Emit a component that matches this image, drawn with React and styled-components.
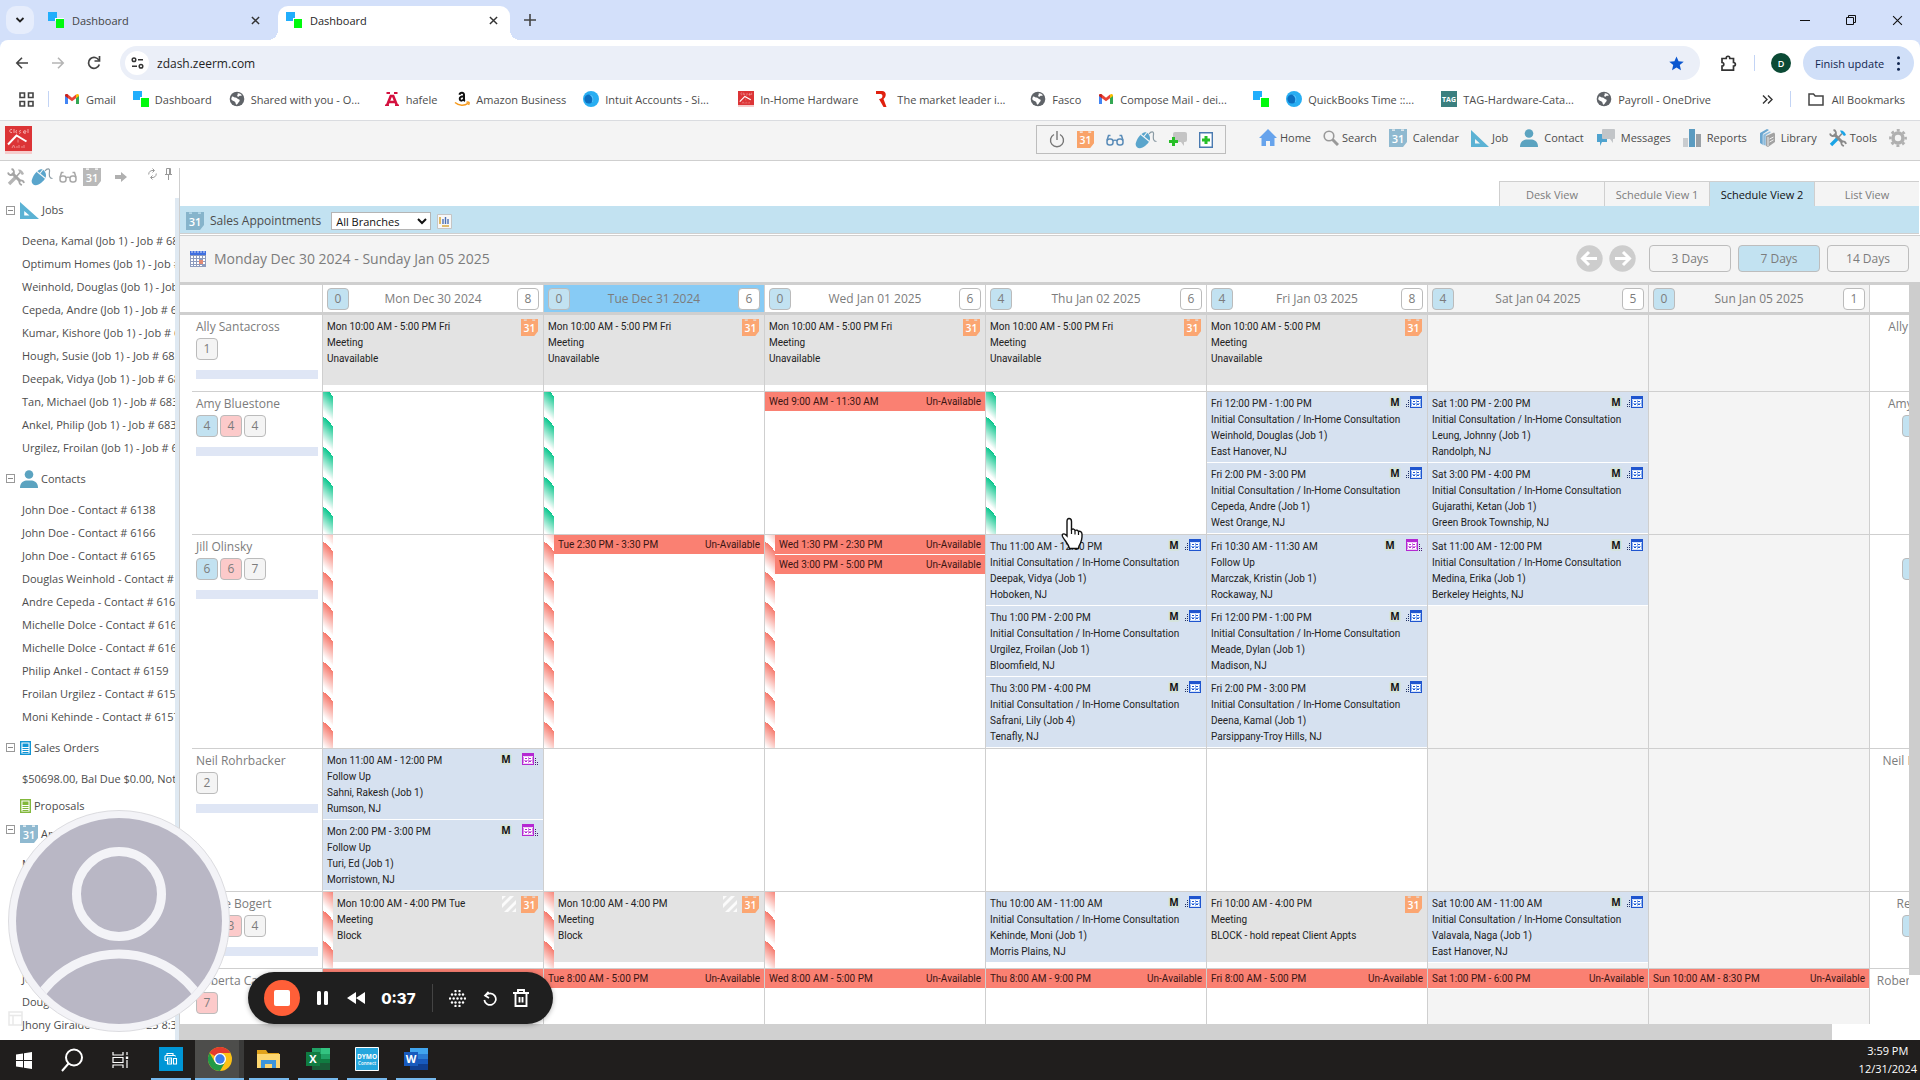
import React from "react";
import styled, { createGlobalStyle, css } from "styled-components";

const GlobalStyle = createGlobalStyle`
  *, *::before, *::after { box-sizing: border-box; }
  body { margin: 0; background: #fff; overflow: hidden; font-family: "Open Sans", "Noto Sans", sans-serif; }
  button, input, select { font: inherit; color: inherit; margin: 0; }
  button { border: 0; padding: 0; background: none; cursor: pointer; }
  a { color: inherit; text-decoration: none; }
  svg { display: block; flex: none; }
`;

const color = {
  strip: "#d3e0fa",
  omni: "#ebeff8",
  grey: "#f4f4f4",
  line: "#cfcfcf",
  blue: "#c2e2f1",
  card: "#d6e1f0",
  meeting: "#e3e3e3",
  red: "#fa8072",
  text: "#4c4c4c",
  soft: "#7c7c7c",
};

/* ---------- icons ---------- */

const ZLogo = () => (
  <svg width="16" height="16" viewBox="0 0 16 16">
    <path d="M0 0h9v9H0z" fill="#21aefc" />
    <path d="M7 6h9v10H8V9H7z" fill="#fff" />
    <path d="M8 7h8v9H8z" fill="#00fa0c" />
  </svg>
);
const Cross = ({ size = 9, w = 1.6, c = "#333" }) => (
  <svg width={size} height={size} viewBox="0 0 10 10" stroke={c} strokeWidth={w} fill="none">
    <path d="M1 1l8 8M9 1l-8 8" />
  </svg>
);
const Gmail = () => (
  <svg width="16" height="16" viewBox="0 0 16 16">
    <path d="M1 4v9h3V6.500z" fill="#4285f4" />
    <path d="M15 4v9h-3V6.500z" fill="#34a853" />
    <path d="M1 4.500c0-1.600 1.700-2 3-1l4 3.200 4-3.200v3.700L8 10.300 4 7.200z" fill="#ea4335" />
    <path d="M1 4.500c0-1.600 1.700-2 3-1v3.700L1 5z" fill="#c5221f" />
    <path d="M12 3.500c1.300-1 3-.6 3 1V5l-3 2.200z" fill="#fbbc04" />
  </svg>
);
const Globe = () => (
  <svg width="16" height="16" viewBox="0 0 16 16">
    <circle cx="8" cy="8" r="7.300" fill="#5f6368" />
    <path d="M3 5.500c1.500-.5 2 1 3.500 1S8 8 9.500 8.200c1.500.2 1.500 1.600.6 2.600-1 1-1.600 2.600-2.600 3-1-.4-.7-1.800-1.400-2.700C5.200 10 2.500 9.500 2.200 8zM8.500 2.200c1.300-.3 3.500.6 4.300 2-.8 1.300-1.800 0-2.800 1s-1.800.6-1.800-.6 1.300-1 .3-2.400z" fill="#fff" />
  </svg>
);
const Hafele = () => (
  <svg width="16" height="16" viewBox="0 0 16 16" fill="none" stroke="#d4113f" strokeWidth="2.600">
    <path d="M3 14.500L6.800 5h2.400L13 14.500M4.500 11h7" />
    <path d="M2.500 2h3.500M10 2h3.500" strokeWidth="2.200" />
    <path d="M1 14.300h4M11 14.300h4" strokeWidth="1.400" />
  </svg>
);
const Amazon = () => (
  <svg width="16" height="16" viewBox="0 0 16 16" fill="none">
    <path d="M5.500 3.800C6 1.300 10 1 10 3.800V8.500c0 .7.500 1.300 1 1.500M10 5.300C7.500 5.200 5.600 6 5.700 8c.2 2.200 3.600 2.200 4.300-.2" stroke="#111" strokeWidth="2" />
    <path d="M1 11.500c4 3.500 9.500 3.500 13 .8M14.500 13.800c.6-1 .8-2 .3-2.500-.6-.4-1.500-.3-2.300.1" stroke="#f79a1c" strokeWidth="1.500" />
  </svg>
);
const Intuit = () => (
  <svg width="16" height="16" viewBox="0 0 16 16">
    <circle cx="8" cy="8" r="8" fill="#28aef2" />
    <circle cx="6" cy="8" r="4.600" fill="#0c6fc0" />
    <path d="M6 3.400a4.600 4.600 0 0 1 2.500 8.500A6 6 0 0 0 6 3.400z" fill="#4fc3ff" />
  </svg>
);
const Closets = ({ w = 16, h = 16 }) => (
  <svg width={w} height={h} viewBox="0 0 27 28" preserveAspectRatio="none">
    <path d="M0 0h27v25H0z" fill="#dc3436" />
    <path d="M0 25h27v3H0z" fill="#f6cccc" />
    <path d="M3 18.500L11.500 9.500l10 6" stroke="#fff" strokeWidth="2" fill="none" />
    <path d="M7 3.500c-3-1-3 4 0 3M9 3v4M12 4.500a1 1 0 1 0 .1 2.500M16 4.500c-2 0-2 1.200-1 1.500s.6 1.500-1 1.300M18.500 6h2.500c0-2-2.500-2-2.500 0s2 1.400 2.500.8M23 3v4" stroke="#f6b4b4" strokeWidth=".9" fill="none" />
    <path d="M13 13.500v3M7 22l1.500-3L10 22M12 20v2M14 19v3M17 20v2M19 19v3" stroke="#ee8a8a" strokeWidth="1" fill="none" />
  </svg>
);
const Richelieu = () => (
  <svg width="16" height="16" viewBox="0 0 16 16">
    <path d="M1 0h6c5 0 4.500 6 1.500 8l3 8H8.500L4 8c4 .3 4.500-5 1.500-5H1z" fill="#e0200e" />
  </svg>
);
const Tag = () => (
  <svg width="16" height="16" viewBox="0 0 16 16">
    <path d="M0 0h16v16H0z" fill="#3a7f7f" />
    <text x="8" y="11" fontSize="7" fontWeight="700" fill="#fff" textAnchor="middle" fontFamily="Open Sans">TAG</text>
  </svg>
);
const Day31 = ({ c = "#8fb9d0", size = 18 }) => (
  <svg width={size} height={size} viewBox="0 0 18 18">
    <path d="M0 0h3v2h3V0h6v2h3V0h3v13l-4 5H0z" fill={c} />
    <path d="M3 0h3v1.500H3zM12 0h3v1.500h-3z" fill={c} opacity=".5" />
    <text x="9" y="14" fontSize="11" fontWeight="600" fill="#fff" textAnchor="middle" fontFamily="Open Sans">31</text>
  </svg>
);
const Triangle = ({ size = 18 }) => (
  <svg width={size} height="18" viewBox="0 0 18 18" preserveAspectRatio="none">
    <path d="M0 1l18 17H0zM4 10v4.500h5z" fill="#5bb2d4" fillRule="evenodd" />
  </svg>
);
const Person = () => (
  <svg width="18" height="18" viewBox="0 0 18 18" fill="#5ba3c0">
    <circle cx="9" cy="4.500" r="4.300" />
    <path d="M0 18c0-5 3-7 6-7.500h6c3 .5 6 2.500 6 7.500z" />
  </svg>
);
const Glasses = ({ c = "#5a8cb8" }) => (
  <svg width="18" height="12" viewBox="0 0 18 12" fill="none" stroke={c} strokeWidth="1.500">
    <rect x="1" y="5" width="6" height="6" rx="2.500" />
    <rect x="11" y="5" width="6" height="6" rx="2.500" />
    <path d="M7 7c1-1 3-1 4 0M1 6.500L2.500 1.500h2M17 6.500L15.500 1.500h-2" />
  </svg>
);
const Mouse = ({ size = 22 }) => (
  <svg width={size} height="18" viewBox="0 0 22 18">
    <path d="M1 11.500C-.5 15 3 19 7.500 16.500c4-2 7.500-6 7.500-9C15 3 11 0 8 2 5 3.500 2 8 1 11.500z" fill="#5aa5cc" />
    <path d="M6 3.500l8.500 7M8.500 6L12 1.500" stroke="#f7f7f7" strokeWidth="1.100" />
    <path d="M14 3c2-3 5-3 4.500.5-.5 3.500-.5 7 3 7" fill="none" stroke="#8a9aa3" strokeWidth="1.200" />
  </svg>
);
const Tools = ({ c = "#8a8a8a", a = "#1ba4e6" }) => (
  <svg width="18" height="18" viewBox="0 0 18 18" fill="none" strokeWidth="3">
    <path d="M2 16l6.500-6.500" stroke={a} strokeWidth="3.400" />
    <path d="M8.500 9.500l4.500-5" stroke={c} strokeWidth="1.600" />
    <path d="M11 1.500c3-.5 4.500 1 6 4.500l-2 1-3-3.500z" fill={a} />
    <path d="M5 5l8.500 8.500" stroke={c} />
    <path d="M1 4.500c.5 2.500 3 3 5 2M4.500 1c2.500.5 3 3 2 5M12.500 13c-.5 2 .5 3.500 2.500 4M13 12.500c2-.5 3.500.5 4 2.500" stroke={c} strokeWidth="1.800" />
  </svg>
);
const Gear = () => (
  <svg width="18" height="18" viewBox="0 0 18 18">
    <circle cx="9" cy="9" r="5" fill="none" stroke="#b0b0b0" strokeWidth="3.600" />
    <circle cx="9" cy="9" r="7.700" fill="none" stroke="#b0b0b0" strokeWidth="2.400" strokeDasharray="3 3.047" strokeDashoffset="1.500" />
  </svg>
);
const Home = () => (
  <svg width="18" height="17" viewBox="0 0 18 17">
    <path d="M9 0l9 9h-2.500v8H11v-5H7v5H2.500V9H0z" fill="#66a3ec" />
  </svg>
);
const Search = () => (
  <svg width="16" height="16" viewBox="0 0 16 16" fill="none" stroke="#999">
    <circle cx="6" cy="6" r="4.800" strokeWidth="1.600" />
    <path d="M9.500 9.500l5.500 5.500" strokeWidth="3" />
  </svg>
);
const Messages = () => (
  <svg width="19" height="17" viewBox="0 0 19 17">
    <path d="M1 5h10v8H6l-2 4v-4H1z" fill="#4fa3cf" />
    <path d="M7 0h11a1 1 0 0 1 1 1v8a1 1 0 0 1-1 1h-1v4l-3-4H7a1 1 0 0 1-1-1V1a1 1 0 0 1 1-1z" fill="#c2c5c8" />
  </svg>
);
const Reports = () => (
  <svg width="18" height="18" viewBox="0 0 18 18">
    <path d="M0 9h5v9H0z" fill="#c9cccf" />
    <path d="M6 0h6v18H6z" fill="#5b9bc0" />
    <path d="M13 5h5v13h-5z" fill="#9aa0a5" />
  </svg>
);
const Library = () => (
  <svg width="16" height="18" viewBox="0 0 16 18">
    <path d="M1 4l7-4 2 1-6 4v11L1 14z" fill="#6aa6d0" />
    <path d="M4 5.500L11 2l1 1.500-5 3V17l-3-1z" fill="#8dbbdc" stroke="#f4f4f4" strokeWidth=".5" />
    <path d="M7 7l8-3.500 1 1V13l-7 5-2-1z" fill="#a2a2a2" />
    <path d="M9 8v9M10.500 10l4-2M10.500 13l4-2.200" stroke="#eee" />
  </svg>
);
const ChatPlus = () => (
  <svg width="18" height="16" viewBox="0 0 18 16">
    <path d="M6 0h10a2 2 0 0 1 2 2v6a2 2 0 0 1-2 2h-1v4l-3-4H6a2 2 0 0 1-2-2V2a2 2 0 0 1 2-2z" fill="#c4c4c4" />
    <path d="M0 8h3V5h3v3h3v3H6v3H3v-3H0z" fill="#27bf27" />
  </svg>
);
const DocPlus = () => (
  <svg width="14" height="16" viewBox="0 0 14 16">
    <path d="M.7.700h12.600v14.600H.7z" fill="#fff" stroke="#4a7ab0" strokeWidth="1.400" />
    <path d="M3 6.500h2.500V4h3v2.500H11v3H8.500V12h-3V9.500H3z" fill="#27bf27" />
  </svg>
);
const Power = () => (
  <svg width="16" height="17" viewBox="0 0 16 17" fill="none" stroke="#777" strokeWidth="1.400">
    <path d="M5 3.500a6.500 6.500 0 1 0 6 0M8 0v9" />
  </svg>
);
const MiniCal = () => (
  <svg width="16" height="17" viewBox="0 0 16 17">
    <path d="M0 1h16v16H0z" fill="#8d9bbd" />
    <path d="M0 1h16v4H0z" fill="#3f6fe0" />
    <path d="M2 0v3M5 0v3M8 0v3M11 0v3M14 0v3" stroke="#fff" strokeWidth=".8" />
    <path d="M1 6h2v2H1zM4 6h2v2H4zM7 6h2v2H7zM10 6h2v2h-2zM13 6h2v2h-2zM1 9h2v2H1zM4 9h2v2H4zM7 9h2v2H7zM13 9h2v2h-2zM1 12h2v2H1zM4 12h2v2H4zM7 12h2v2H7zM13 12h2v2h-2zM1 15h2v1H1zM4 15h2v1H4zM7 15h2v1H7zM10 15h2v1h-2z" fill="#fff" />
    <path d="M9 10h4v4H9z" fill="#e08a74" />
  </svg>
);
const Chart = () => (
  <svg width="15" height="15" viewBox="0 0 15 15">
    <path d="M.5.500h14v14H.5z" fill="#f7f7f7" stroke="#c5c5c5" />
    <path d="M3 3v7M5 12h7" stroke="#d9a941" strokeWidth="1.600" />
    <path d="M6 5v5M8.500 3v7M11 5v5" stroke="#4a6fb5" strokeWidth="1.400" />
  </svg>
);
const FormIcon = ({ purple }) => {
  const c = purple ? "#b428d2" : "#1f55cf";
  const soft = purple ? "#d98be8" : "#8fb4f0";
  const dark = purple ? "#4a1a70" : "#1d2f66";
  return (
    <svg width="16" height="12" viewBox="0 0 16 12">
      <g transform={purple ? "" : "translate(4 0)"}>
        <path d="M0 0h12v12H0z" fill={c} />
        <path d="M1 3h10v8H1z" fill={soft} />
        <path d="M1 3h10v1H1zM1 10h10v1H1z" fill="#fff" opacity=".6" />
        <path d="M2 4h4v3H2zM2 8h4v2H2zM7 4h3v3H7zM7 8h3v2H7z" fill="#fff" />
        <path d="M3 5h2v1H3zM3 8h2v1H3zM7 5h2v1H7zM7 8h2v1H7z" fill={c} />
      </g>
      <path d={purple ? "M13.500 5v7M15.500 9v3" : "M2.500 4v8M.5 8v4"} stroke={dark} strokeWidth="1" strokeDasharray="1 1" />
    </svg>
  );
};
const Hatch = () => (
  <svg width="14" height="16" viewBox="0 0 14 16">
    <path d="M0 8l8-8h4L0 12zM2 16L14 4v4l-8 8zM10 16l4-4v4zM0 0h4L0 4z" fill="#fff" opacity=".85" />
  </svg>
);
const Sheet = ({ c }) => (
  <svg width="11" height="14" viewBox="0 0 11 14">
    <path d="M.7.700h9.600v12.600H.7z" fill="#fff" stroke={c} strokeWidth="1.400" />
    <path d="M2.500 3.500h6M2.500 5h6" stroke={c} strokeWidth="1.800" />
    <path d="M2.500 7.500h6M2.500 9.500h6M2.500 11.500h6" stroke={c} strokeWidth="1" />
  </svg>
);
const ArrowDisc = ({ back }) => (
  <svg width="27" height="27" viewBox="0 0 27 27">
    <circle cx="13.500" cy="13.500" r="13.200" fill="#cdcdcd" />
    <path d={back ? "M21 13.500H7M13 7l-6.500 6.500L13 20" : "M6 13.500h14M14 7l6.500 6.500L14 20"} stroke="#fff" strokeWidth="3" fill="none" />
  </svg>
);

/* ---------- browser chrome ---------- */

const Screen = styled.div`
  position: relative;
  display: flex;
  flex-direction: column;
  height: 100vh;
  overflow: hidden;
  font-size: 11px;
  color: ${color.text};
`;
const TabStrip = styled.div`
  display: flex;
  flex: none;
  align-items: flex-end;
  height: 40px;
  padding-left: 6px;
  background: ${color.strip};
`;
const TabMenu = styled.button`
  display: grid;
  place-items: center;
  align-self: center;
  width: 28px;
  height: 28px;
  margin-right: 6px;
  border-radius: 10px;
  background: #e6edfc;
`;
const BrowserTab = styled.div`
  position: relative;
  display: flex;
  align-items: center;
  width: 232px;
  height: 34px;
  margin-right: 6px;
  padding: 0 12px 6px 8px;
  border-radius: 10px 10px 0 0;
  color: #444;
  ${(p) =>
    p.$active &&
    css`
      background: #fff;
      color: #1f1f1f;
      &::before, &::after {
        content: "";
        position: absolute;
        bottom: 0;
        width: 10px;
        height: 10px;
      }
      &::before { left: -10px; background: radial-gradient(circle at 0 0, transparent 10px, #fff 10px); }
      &::after { right: -10px; background: radial-gradient(circle at 100% 0, transparent 10px, #fff 10px); }
    `}
`;
const TabTitle = styled.span`
  flex: 1;
  margin-left: 8px;
`;
const NewTab = styled.button`
  display: grid;
  place-items: center;
  width: 28px;
  height: 40px;
`;
const WindowControls = styled.div`
  display: flex;
  margin-left: auto;
`;
const WindowButton = styled.button`
  display: grid;
  place-items: center;
  width: 46px;
  height: 40px;
`;
const ToolbarBack = styled.div`
  flex: none;
  background: ${color.strip};
`;
const Toolbar = styled.div`
  display: flex;
  align-items: center;
  height: 40px;
  padding: 6px 6px 0 4px;
  border-radius: 8px 8px 0 0;
  background: #fff;
`;
const NavButton = styled.button`
  display: grid;
  place-items: center;
  width: 36px;
  height: 34px;
`;
const Omnibox = styled.label`
  display: flex;
  flex: 1;
  align-items: center;
  height: 34px;
  margin-left: 8px;
  padding: 0 16px 0 5px;
  border-radius: 17px;
  background: ${color.omni};
`;
const SiteInfo = styled.span`
  display: grid;
  place-items: center;
  width: 24px;
  height: 24px;
  border-radius: 12px;
  background: #fff;
`;
const Address = styled.input`
  flex: 1;
  border: 0;
  padding: 0 8px;
  outline: 0;
  background: none;
  font-size: 12px;
  color: #1f1f1f;
`;
const Puzzle = styled(NavButton)`
  margin-left: 10px;
`;
const Rule = styled.span`
  width: 1px;
  height: 16px;
  margin: 0 8px;
  background: #c3d4f5;
`;
const Profile = styled.button`
  width: 20px;
  height: 20px;
  margin: 0 12px 0 8px;
  border-radius: 10px;
  background: #0b4a35;
  color: #fff;
  font-size: 9px;
  font-weight: 600;
`;
const UpdateButton = styled.button`
  display: flex;
  align-items: center;
  justify-content: space-between;
  width: 111px;
  height: 34px;
  padding: 0 14px 0 12px;
  border-radius: 17px;
  background: #d0dff8;
  color: #10264f;
`;
const Bookmarks = styled.nav`
  display: flex;
  flex: none;
  align-items: center;
  height: 41px;
  padding: 0 15px 2px 19px;
  border-bottom: 1px solid #dadce0;
  background: #fff;
`;
const Apps = styled.button`
  margin-right: 14px;
`;
const BookmarkRule = styled(Rule)`
  margin: 0 15px 0 0;
`;
const BookmarkRuleEnd = styled(Rule)`
  margin: 0;
`;
const Bookmark = styled.a`
  display: flex;
  align-items: center;
  gap: 6px;
  margin-right: 17px;
  white-space: nowrap;
`;
const BookmarkLabel = styled.span`
  width: ${(p) => (p.$full ? "116px" : "auto")};
`;
const BookmarkEnd = styled.div`
  display: flex;
  align-items: center;
  gap: 17px;
  margin-left: auto;
`;
const AllBookmarks = styled.a`
  display: flex;
  align-items: center;
  gap: 8px;
`;

/* ---------- application ---------- */

const AppHeader = styled.header`
  display: flex;
  flex: none;
  align-items: flex-start;
  height: 40px;
  padding: 4px 13px 0 5px;
  border-bottom: 1px solid ${color.line};
  background: ${color.grey};
`;
const LogoLink = styled.a`
  padding-top: 1px;
`;
const QuickTools = styled.div`
  display: flex;
  align-items: center;
  justify-content: space-between;
  width: 190px;
  height: 29px;
  margin: 0 33px 0 auto;
  padding: 0 12px;
  border: 1px solid #bdbdbd;
`;
const MainNav = styled.nav`
  display: flex;
  align-items: center;
  gap: 12px;
  height: 25px;
`;
const NavLink = styled.a`
  display: flex;
  align-items: center;
  gap: ${(p) => (p.$tight ? 3 : 6)}px;
`;
const Body = styled.div`
  display: flex;
  flex: 1;
  min-height: 0;
`;
const Sidebar = styled.aside`
  display: flex;
  flex: none;
  flex-direction: column;
  width: 180px;
  padding-top: 7px;
`;
const SidebarInner = styled.div`
  display: flex;
  flex: 1;
  min-height: 0;
  border-right: 1px solid ${color.line};
`;
const SidebarContent = styled.div`
  flex: 1;
  min-width: 0;
  overflow: hidden;
`;
const SidebarScroll = styled.div`
  width: 4px;
  margin-top: 30px;
  background: #dfe9f2;
`;
const SidebarTools = styled.div`
  display: flex;
  align-items: center;
  gap: 6px;
  height: 18px;
  margin-bottom: 5px;
  padding-left: 7px;
`;
const SideArrow = styled.svg`
  margin-left: 8px;
`;
const SideRefresh = styled.svg`
  margin: 0 0 6px 15px;
`;
const SidePin = styled.svg`
  margin: 0 0 6px 2px;
`;
const SideHeading = styled.h2`
  display: flex;
  align-items: ${(p) => (p.$top ? "flex-start" : "center")};
  gap: 3px;
  height: ${(p) => p.$h || 38}px;
  margin: 0;
  padding: ${(p) => (p.$top ? "3px 0 0 6px" : "0 0 0 6px")};
  font-size: 11px;
  font-weight: 400;
  line-height: 18px;
  white-space: nowrap;
`;
const Toggle = styled.button`
  display: grid;
  place-items: center;
  width: 9px;
  height: 9px;
  margin-right: 2px;
  border: 1px solid #999;
  visibility: ${(p) => (p.$hidden ? "hidden" : "visible")};
  &::before { content: ""; width: 5px; height: 1px; background: #888; }
`;
const SideList = styled.ul`
  margin: 0;
  padding: 0 0 0 22px;
  list-style: none;
`;
const SideItem = styled.li`
  height: 23px;
  line-height: 23px;
  white-space: nowrap;
`;
const Main = styled.main`
  display: flex;
  flex: 1;
  flex-direction: column;
  min-width: 0;
`;
const ViewTabs = styled.div`
  display: flex;
  flex: none;
  align-items: flex-end;
  justify-content: flex-end;
  height: 45px;
  padding-right: 1px;
`;
const ViewTab = styled.button`
  width: 105px;
  height: 25px;
  border: 1px solid ${color.line};
  border-width: 1px 0 0 1px;
  background: ${(p) => (p.$active ? color.blue : color.grey)};
  color: ${(p) => (p.$active ? "#111" : color.soft)};
  font-size: 11px;
`;
const SectionBar = styled.div`
  display: flex;
  flex: none;
  align-items: center;
  height: 28px;
  margin: 0 1px 1px 0;
  padding: 3px 0 0 6px;
  border-bottom: 1px solid ${color.line};
  background: ${color.blue};
`;
const SectionTitle = styled.h1`
  margin: 0 10px 0 6px;
  font-size: 12px;
  font-weight: 400;
  line-height: 18px;
`;
const SelectBox = styled.span`
  position: relative;
  width: 100px;
  height: 18px;
  margin-right: 6px;
  svg { position: absolute; top: 6px; right: 4px; pointer-events: none; }
`;
const BranchSelect = styled.select`
  display: block;
  width: 100%;
  height: 18px;
  padding: 0 4px;
  border: 1px solid #b5b5b5;
  border-radius: 0;
  background: #fff;
  appearance: none;
  color: #111;
  font-size: 11px;
`;
const DateBar = styled.div`
  display: flex;
  flex: none;
  align-items: center;
  height: 47px;
  padding: 0 11px 1px 10px;
  border-top: 1px solid ${color.line};
  background: ${color.grey};
  color: ${color.soft};
`;
const DateRange = styled.h2`
  flex: 1;
  margin: 0 0 0 8px;
  font-size: 14px;
  font-weight: 400;
`;
const RoundButton = styled.button`
  margin-right: 6px;
`;
const RangeButton = styled.button`
  width: 82px;
  height: 27px;
  margin-left: 7px;
  border: 1px solid #bdbdbd;
  border-radius: 4px;
  background: ${(p) => (p.$active ? color.blue : color.grey)};
  font-size: 12px;
`;
const Scheduler = styled.div`
  display: flex;
  flex: 1;
  min-height: 0;
`;
const TableClip = styled.div`
  flex: 1;
  min-width: 0;
  overflow: hidden;
`;
const VScroll = styled.div`
  width: 11px;
  margin-bottom: 49px;
  background: #cdcdcd;
`;
const HScroll = styled.div`
  flex: none;
  height: 16px;
  margin-right: 88px;
  background: #d0d0d0;
`;
const Grid = styled.table`
  width: 100%;
  table-layout: fixed;
  border-collapse: separate;
  border-spacing: 0;
`;
const Col = styled.col`
  width: ${(p) => (p.$w ? p.$w + "px" : "auto")};
`;
const HeadCell = styled.th`
  height: 33px;
  padding: 0;
  border: 3px solid ${color.line};
  border-width: 3px 0;
  background: ${(p) => (p.$today ? "#87cbf5" : p.$off ? color.grey : "#fff")};
  color: ${color.soft};
  font-size: 12px;
  font-weight: 400;
  ${(p) => p.$divided && `box-shadow: inset 1px 0 0 ${color.line};`}
`;
const HeadInner = styled.div`
  display: flex;
  align-items: center;
  justify-content: space-between;
  padding: 0 4px 0 5px;
`;
const Count = styled.span`
  display: inline-grid;
  place-items: center;
  flex: none;
  width: 22px;
  height: 22px;
  border: 1px solid #bbb;
  border-radius: 4px;
  background: ${(p) => ({ blue: color.blue, red: "#fccaca", white: "#fff", grey: color.grey })[p.$tone]};
  color: ${color.soft};
  font-size: 12px;
  font-weight: 400;
  line-height: 18px;
`;
const Gutter = styled.td`
  padding: 0;
`;
const NameCell = styled.th`
  height: 77px;
  padding: 3px 4px 0;
  border-bottom: 1px solid ${color.line};
  vertical-align: top;
  text-align: left;
  font-weight: 400;
`;
const Name = styled.div`
  color: ${color.soft};
  font-size: 12px;
  line-height: 18px;
  white-space: nowrap;
`;
const Counts = styled.div`
  display: flex;
  gap: 2px;
  height: 22px;
  margin: 2px 0 10px;
`;
const LoadBar = styled.div`
  height: 9px;
  background: #dfe6f5;
`;
const EndCell = styled.td`
  padding: 3px 0 0;
  overflow: hidden;
  border: 1px solid ${color.line};
  border-width: 0 0 1px 1px;
  vertical-align: top;
`;
const EndInner = styled.div`
  display: flex;
  flex-direction: column;
  align-items: flex-end;
  width: 102px;
`;
const stripe = {
  green: "linear-gradient(225deg, #cdf3e6 0, #fff 13%, #fff 25%, #0ec78f 25%, #fff 88%)",
  red: "linear-gradient(225deg, #fdded9 0, #fff 13%, #fff 25%, #f67a6d 25%, #fff 88%)",
};
const DayCell = styled.td`
  padding: 0 0 0 ${(p) => (p.$stripe ? 10 : 0)}px;
  border: 1px solid ${color.line};
  border-width: 0 0 1px 1px;
  vertical-align: top;
  background-color: ${(p) => (p.$off ? color.grey : "#fff")};
  ${(p) =>
    p.$stripe &&
    css`
      background-image: ${stripe[p.$stripe]};
      background-repeat: repeat-y;
      background-size: 10px 30px;
      background-position: 0 ${p.$phase}px;
    `}
`;
const Card = styled.article`
  display: flex;
  justify-content: space-between;
  height: 71px;
  padding: 4px 5px 0 4px;
  border-bottom: 1px solid #fff;
  background: ${(p) => (p.$meeting ? color.meeting : color.card)};
  color: #222;
  font-family: Roboto, "Open Sans", sans-serif;
  font-size: 10px;
  line-height: 16px;
  white-space: nowrap;
`;
const CardText = styled.div`
  width: 0;
`;
const CardIcons = styled.div`
  display: flex;
  gap: ${(p) => (p.$wide ? 10 : 5)}px;
`;
const MBadge = styled.b`
  width: 12px;
  height: 12px;
  border-radius: 3px;
  background: #d5e3dc;
  color: #111;
  font-family: "Open Sans", sans-serif;
  font-size: 10px;
  line-height: 12px;
  text-align: center;
`;
const Busy = styled.div`
  display: flex;
  justify-content: space-between;
  height: 20px;
  padding: 0 4px;
  border-bottom: 1px solid #fff;
  background: ${color.red};
  color: #3a1512;
  font-family: Roboto, "Open Sans", sans-serif;
  font-size: 10px;
  line-height: 19px;
`;

/* ---------- floating recorder ---------- */

const Avatar = styled.div`
  position: absolute;
  left: 8px;
  bottom: 48px;
`;
const Ghost = styled.div`
  position: absolute;
  left: 8px;
  bottom: 54px;
  opacity: .5;
`;
const Recorder = styled.div`
  position: absolute;
  left: 248px;
  bottom: 56px;
  display: flex;
  align-items: center;
  justify-content: space-between;
  width: 305px;
  height: 52px;
  padding: 0 24px 0 16px;
  border-radius: 26px;
  background: #1f1f1f;
  box-shadow: 0 1px 5px rgba(0, 0, 0, .3);
`;
const StopButton = styled.button`
  display: grid;
  place-items: center;
  width: 36px;
  height: 36px;
  border-radius: 18px;
  background: #ff5f38;
  &::before { content: ""; width: 16px; height: 16px; border-radius: 2px; background: #fff; }
`;
const Time = styled.time`
  color: #fff;
  font-family: Inter, sans-serif;
  font-size: 15px;
  font-weight: 800;
`;
const RecorderRule = styled.span`
  width: 1px;
  height: 28px;
  background: #444;
`;
const Pointer = styled.div`
  position: absolute;
  left: 1060px;
  top: 516px;
  pointer-events: none;
`;

/* ---------- taskbar ---------- */

const Taskbar = styled.footer`
  display: flex;
  flex: none;
  height: 40px;
  background: #201e1d;
  color: #fff;
`;
const SystemButton = styled.button`
  display: grid;
  place-items: center;
  width: 48px;
`;
const AppButton = styled.button`
  display: grid;
  grid-template-rows: 1fr 2px;
  place-items: center;
  width: 49px;
  background: ${(p) => (p.$active ? "linear-gradient(90deg, #4d4d4b 90%, #3a3a39 90%)" : "none")};
  &::after { content: ""; width: ${(p) => (p.$active ? 49 : 40)}px; height: 2px; background: #76b9ed; }
`;
const Clock = styled.div`
  margin-left: auto;
  padding: 2px 3px 0;
  text-align: center;
  font-size: 11px;
  line-height: 18px;
`;
const FirstApp = styled.div`
  width: 2px;
`;

/* ---------- data ---------- */

const bookmarks = [
  [<Gmail />, "Gmail"],
  [<ZLogo />, "Dashboard"],
  [<Globe />, "Shared with you - O...", 1],
  [<Hafele />, "hafele"],
  [<Amazon />, "Amazon Business"],
  [<Intuit />, "Intuit Accounts - Si...", 1],
  [<Closets />, "In-Home Hardware"],
  [<Richelieu />, "The market leader i...", 1],
  [<Globe />, "Fasco"],
  [<Gmail />, "Compose Mail - dei...", 1],
  [<ZLogo />, ""],
  [<Intuit />, "QuickBooks Time ::...", 1],
  [<Tag />, "TAG-Hardware-Cata...", 1],
  [<Globe />, "Payroll - OneDrive"],
];
const nav = [
  [<Home />, "Home", 1],
  [<Search />, "Search", 1],
  [<Day31 />, "Calendar"],
  [<Triangle />, "Job", 1],
  [<Person />, "Contact"],
  [<Messages />, "Messages"],
  [<Reports />, "Reports"],
  [<Library />, "Library"],
  [<Tools />, "Tools", 1],
];
const jobs = [
  "Deena, Kamal (Job 1) - Job # 6841",
  "Optimum Homes (Job 1) - Job # 6840",
  "Weinhold, Douglas (Job 1) - Job # 6839",
  "Cepeda, Andre (Job 1) - Job # 6838",
  "Kumar, Kishore (Job 1) - Job # 6837",
  "Hough, Susie (Job 1) - Job # 6836",
  "Deepak, Vidya (Job 1) - Job # 6835",
  "Tan, Michael (Job 1) - Job # 6834",
  "Ankel, Philip (Job 1) - Job # 6833",
  "Urgilez, Froilan (Job 1) - Job # 6832",
];
const contacts = [
  "John Doe - Contact # 6138",
  "John Doe - Contact # 6166",
  "John Doe - Contact # 6165",
  "Douglas Weinhold - Contact # 6164",
  "Andre Cepeda - Contact # 6163",
  "Michelle Dolce - Contact # 6162",
  "Michelle Dolce - Contact # 6161",
  "Philip Ankel - Contact # 6159",
  "Froilan Urgilez - Contact # 6158",
  "Moni Kehinde - Contact # 6157",
];
const appointments = [
  "Moni Kehinde 01/02/25",
  "Naga Valavala 01/04/25",
  "Ed Turi 12/30/24",
  "Rakesh Sahni 12/30/24",
  "Erika Medina 01/04/25",
  "Johnny Leung 01/04/25",
  "Douglas Weinhold 01/03",
  "Jhony Giraldo - 12/28/2025 8:30 AM",
];
const days = [
  ["Mon Dec 30 2024", 0, 8],
  ["Tue Dec 31 2024", 0, 6, "today"],
  ["Wed Jan 01 2025", 0, 6],
  ["Thu Jan 02 2025", 4, 6],
  ["Fri Jan 03 2025", 4, 8],
  ["Sat Jan 04 2025", 4, 5, "off"],
  ["Sun Jan 05 2025", 0, 1, "off"],
];

const IC = "Initial Consultation / In-Home Consultation";
const appt = (time, who, where, kind = IC) => ({ type: "appt", lines: [time, kind, who, where], purple: kind !== IC });
const meet = (time, note, hatch) => ({ type: "meet", lines: [time, "Meeting", note], hatch });
const busy = (time) => ({ type: "busy", time });
const day = (items = [], stripeTone) => ({ items, stripe: stripeTone });

const rows = [
  {
    name: "Ally Santacross",
    counts: [[1, "grey"]],
    days: [
      day([meet("Mon 10:00 AM - 5:00 PM Fri", "Unavailable")]),
      day([meet("Mon 10:00 AM - 5:00 PM Fri", "Unavailable")]),
      day([meet("Mon 10:00 AM - 5:00 PM Fri", "Unavailable")]),
      day([meet("Mon 10:00 AM - 5:00 PM Fri", "Unavailable")]),
      day([meet("Mon 10:00 AM - 5:00 PM", "Unavailable")]),
      day(),
      day(),
    ],
  },
  {
    name: "Amy Bluestone",
    counts: [[4, "blue"], [4, "red"], [4, "grey"]],
    phase: 24,
    days: [
      day([], "green"),
      day([], "green"),
      day([busy("Wed 9:00 AM - 11:30 AM")]),
      day([], "green"),
      day([
        appt("Fri 12:00 PM - 1:00 PM", "Weinhold, Douglas (Job 1)", "East Hanover, NJ"),
        appt("Fri 2:00 PM - 3:00 PM", "Cepeda, Andre (Job 1)", "West Orange, NJ"),
      ]),
      day([
        appt("Sat 1:00 PM - 2:00 PM", "Leung, Johnny (Job 1)", "Randolph, NJ"),
        appt("Sat 3:00 PM - 4:00 PM", "Gujarathi, Ketan (Job 1)", "Green Brook Township, NJ"),
      ]),
      day(),
    ],
  },
  {
    name: "Jill Olinsky",
    counts: [[6, "blue"], [6, "red"], [7, "grey"]],
    phase: 6,
    days: [
      day([], "red"),
      day([busy("Tue 2:30 PM - 3:30 PM")], "red"),
      day([busy("Wed 1:30 PM - 2:30 PM"), busy("Wed 3:00 PM - 5:00 PM")], "red"),
      day([
        appt("Thu 11:00 AM - 12:00 PM", "Deepak, Vidya (Job 1)", "Hoboken, NJ"),
        appt("Thu 1:00 PM - 2:00 PM", "Urgilez, Froilan (Job 1)", "Bloomfield, NJ"),
        appt("Thu 3:00 PM - 4:00 PM", "Safrani, Lily (Job 4)", "Tenafly, NJ"),
      ]),
      day([
        appt("Fri 10:30 AM - 11:30 AM", "Marczak, Kristin (Job 1)", "Rockaway, NJ", "Follow Up"),
        appt("Fri 12:00 PM - 1:00 PM", "Meade, Dylan (Job 1)", "Madison, NJ"),
        appt("Fri 2:00 PM - 3:00 PM", "Deena, Kamal (Job 1)", "Parsippany-Troy Hills, NJ"),
      ]),
      day([appt("Sat 11:00 AM - 12:00 PM", "Medina, Erika (Job 1)", "Berkeley Heights, NJ")]),
      day(),
    ],
  },
  {
    name: "Neil Rohrbacker",
    counts: [[2, "grey"]],
    days: [
      day([
        appt("Mon 11:00 AM - 12:00 PM", "Sahni, Rakesh (Job 1)", "Rumson, NJ", "Follow Up"),
        appt("Mon 2:00 PM - 3:00 PM", "Turi, Ed (Job 1)", "Morristown, NJ", "Follow Up"),
      ]),
      day(),
      day(),
      day(),
      day(),
      day(),
      day(),
    ],
  },
  {
    name: "Renee Bogert",
    counts: [[3, "blue"], [3, "red"], [4, "grey"]],
    phase: 18,
    days: [
      day([meet("Mon 10:00 AM - 4:00 PM Tue", "Block", 1)], "red"),
      day([meet("Mon 10:00 AM - 4:00 PM", "Block", 1)], "red"),
      day([], "red"),
      day([appt("Thu 10:00 AM - 11:00 AM", "Kehinde, Moni (Job 1)", "Morris Plains, NJ")]),
      day([meet("Fri 10:00 AM - 4:00 PM", "BLOCK - hold repeat Client Appts")]),
      day([appt("Sat 10:00 AM - 11:00 AM", "Valavala, Naga (Job 1)", "East Hanover, NJ")]),
      day(),
    ],
  },
  {
    name: "Roberta Cavallari",
    counts: [[7, "red"]],
    days: [
      day([busy("Mon 8:00 AM - 5:00 PM")]),
      day([busy("Tue 8:00 AM - 5:00 PM")]),
      day([busy("Wed 8:00 AM - 5:00 PM")]),
      day([busy("Thu 8:00 AM - 9:00 PM")]),
      day([busy("Fri 8:00 AM - 5:00 PM")]),
      day([busy("Sat 1:00 PM - 6:00 PM")]),
      day([busy("Sun 10:00 AM - 8:30 PM")]),
    ],
  },
];

/* ---------- pieces ---------- */

function Item({ item }) {
  if (item.type === "busy") {
    return (
      <Busy>
        <span>{item.time}</span>
        <span>Un-Available</span>
      </Busy>
    );
  }
  return (
    <Card $meeting={item.type === "meet"}>
      <CardText>
        {item.lines.map((line) => (
          <div key={line}>{line}</div>
        ))}
      </CardText>
      {item.type === "meet" ? (
        <CardIcons>
          {item.hatch && <Hatch />}
          <Day31 c="#fba672" size={17} />
        </CardIcons>
      ) : (
        <CardIcons $wide={item.purple}>
          <MBadge>M</MBadge>
          <FormIcon purple={item.purple} />
        </CardIcons>
      )}
    </Card>
  );
}

function Row({ row }) {
  return (
    <tr>
      <Gutter />
      <NameCell scope="row">
        <Name>{row.name}</Name>
        <Counts>
          {row.counts.map(([n, tone]) => (
            <Count key={tone} $tone={tone}>{n}</Count>
          ))}
        </Counts>
        <LoadBar />
      </NameCell>
      {row.days.map((d, i) => (
        <DayCell key={i} $off={i > 4} $stripe={d.stripe} $phase={row.phase}>
          {d.items.map((item, k) => (
            <Item key={k} item={item} />
          ))}
        </DayCell>
      ))}
      <EndCell>
        <EndInner>
          <Name>{row.name}</Name>
          <Counts>
            {row.counts.map(([n, tone]) => (
              <Count key={tone} $tone={tone}>{n}</Count>
            ))}
          </Counts>
        </EndInner>
      </EndCell>
    </tr>
  );
}

function Group({ icon, title, items, h, top, closed }) {
  return (
    <section>
      <SideHeading $h={h} $top={top}>
        <Toggle $hidden={closed} aria-label={"Collapse " + title} />
        {icon}
        {title}
      </SideHeading>
      {items && (
        <SideList>
          {items.map((t, i) => (
            <SideItem key={i}>
              <a href="#item">{t}</a>
            </SideItem>
          ))}
        </SideList>
      )}
    </section>
  );
}

export default function App() {
  return (
    <Screen>
      <GlobalStyle />
      <TabStrip>
        <TabMenu aria-label="Search tabs">
          <svg width="10" height="10" viewBox="0 0 10 10" fill="none" stroke="#222" strokeWidth="1.800">
            <path d="M1.500 3L5 6.500 8.500 3" />
          </svg>
        </TabMenu>
        {[0, 1].map((n) => (
          <BrowserTab key={n} $active={n === 1}>
            <ZLogo />
            <TabTitle>Dashboard</TabTitle>
            <button aria-label="Close tab"><Cross size={9} /></button>
          </BrowserTab>
        ))}
        <NewTab aria-label="New tab">
          <svg width="12" height="12" viewBox="0 0 12 12" stroke="#444" strokeWidth="1.600">
            <path d="M6 0v12M0 6h12" />
          </svg>
        </NewTab>
        <WindowControls>
          <WindowButton aria-label="Minimize">
            <svg width="10" height="10" viewBox="0 0 10 10" stroke="#111"><path d="M0 5.500h10" /></svg>
          </WindowButton>
          <WindowButton aria-label="Restore">
            <svg width="10" height="10" viewBox="0 0 10 10" stroke="#111" fill="none"><path d="M.5 2.500h7v7h-7zM2.500 2.500v-2h7v7h-2" /></svg>
          </WindowButton>
          <WindowButton aria-label="Close"><Cross size={11} w={1} c="#111" /></WindowButton>
        </WindowControls>
      </TabStrip>
      <ToolbarBack>
        <Toolbar>
          <NavButton aria-label="Back">
            <svg width="14" height="12" viewBox="0 0 14 12" fill="none" stroke="#444" strokeWidth="1.600"><path d="M13 6H2M7 .800L1.800 6 7 11.200" /></svg>
          </NavButton>
          <NavButton aria-label="Forward">
            <svg width="14" height="12" viewBox="0 0 14 12" fill="none" stroke="#b5b5b5" strokeWidth="1.600"><path d="M1 6h11M7 .800L12.200 6 7 11.200" /></svg>
          </NavButton>
          <NavButton aria-label="Reload">
            <svg width="14" height="14" viewBox="0 0 14 14" fill="none" stroke="#444" strokeWidth="1.700"><path d="M12.300 8.500A5.500 5.500 0 1 1 12 4.500" /><path d="M12.500 0v5H7.500" /></svg>
          </NavButton>
          <Omnibox>
            <SiteInfo>
              <svg width="13" height="12" viewBox="0 0 13 12" fill="none" stroke="#333" strokeWidth="1.500">
                <circle cx="3" cy="2.700" r="1.800" /><path d="M7 2.700h5M1 9.300h5" /><circle cx="10" cy="9.300" r="1.800" />
              </svg>
            </SiteInfo>
            <Address aria-label="Address" value="zdash.zeerm.com" readOnly />
            <svg width="15" height="15" viewBox="0 0 16 16"><path d="M8 .500l2.200 5.100 5.500.5-4.200 3.600 1.300 5.500L8 12.300l-4.800 2.900 1.300-5.500L.3 6.100l5.500-.5z" fill="#0b57d0" /></svg>
          </Omnibox>
          <Puzzle aria-label="Extensions">
            <svg width="17" height="17" viewBox="0 0 17 17" fill="none" stroke="#333" strokeWidth="1.700">
              <path d="M2 3.500h4.200c0-3 3.600-3 3.600 0H13.500v4c2.500 0 2.500 3.600 0 3.600v4H2v-4c2.400 0 2.400-3.600 0-3.600z" />
            </svg>
          </Puzzle>
          <Rule />
          <Profile aria-label="Profile">D</Profile>
          <UpdateButton>
            Finish update
            <svg width="3" height="15" viewBox="0 0 3 15" fill="#10264f"><circle cx="1.500" cy="1.700" r="1.500" /><circle cx="1.500" cy="7.500" r="1.500" /><circle cx="1.500" cy="13.300" r="1.500" /></svg>
          </UpdateButton>
        </Toolbar>
      </ToolbarBack>
      <Bookmarks aria-label="Bookmarks">
        <Apps aria-label="Apps">
          <svg width="15" height="15" viewBox="0 0 15 15" fill="none" stroke="#444" strokeWidth="1.600"><path d="M1 1h4.500v4.500H1zM9.500 1H14v4.500H9.500zM1 9.500h4.500V14H1zM9.500 9.500H14V14H9.500z" /></svg>
        </Apps>
        <BookmarkRule />
        {bookmarks.map(([icon, label, full], i) => (
          <Bookmark key={i} href="#bookmark" aria-label={label || "Dashboard"}>
            {icon}
            {label && <BookmarkLabel $full={full}>{label}</BookmarkLabel>}
          </Bookmark>
        ))}
        <BookmarkEnd>
          <svg width="11" height="9" viewBox="0 0 11 9" fill="none" stroke="#333" strokeWidth="1.400"><path d="M1 .500l4 4-4 4M6 .500l4 4-4 4" /></svg>
          <BookmarkRuleEnd />
          <AllBookmarks href="#all">
            <svg width="16" height="13" viewBox="0 0 16 13" fill="none" stroke="#444" strokeWidth="1.500"><path d="M1 1h4.500l1.700 2H15v9H1z" /></svg>
            All Bookmarks
          </AllBookmarks>
        </BookmarkEnd>
      </Bookmarks>

      <AppHeader>
        <LogoLink href="#home" aria-label="Closets by Design"><Closets w={27} h={28} /></LogoLink>
        <QuickTools>
          <button aria-label="Log out"><Power /></button>
          <button aria-label="Calendar"><Day31 c="#f9a369" size={17} /></button>
          <button aria-label="View"><Glasses /></button>
          <button aria-label="Pointer"><Mouse /></button>
          <button aria-label="New message"><ChatPlus /></button>
          <button aria-label="New document"><DocPlus /></button>
        </QuickTools>
        <MainNav aria-label="Main">
          {nav.map(([icon, label, tight]) => (
            <NavLink key={label} href={"#" + label} $tight={tight}>
              {icon}
              {label}
            </NavLink>
          ))}
          <button aria-label="Settings"><Gear /></button>
        </MainNav>
      </AppHeader>

      <Body>
        <Sidebar>
          <SidebarInner>
            <SidebarContent>
              <SidebarTools>
                <Tools c="#a5a5a5" a="#b5b5b5" />
                <Mouse />
                <Glasses c="#a8a8a8" />
                <Day31 c="#b9b9b9" />
                <SideArrow width="12" height="10" viewBox="0 0 12 10"><path d="M0 3h6V0l6 5-6 5V7H0z" fill="#b0b0b0" /></SideArrow>
                <SideRefresh width="9" height="12" viewBox="0 0 9 12" fill="none" stroke="#999">
                  <path d="M.7 6.500C.7 3.500 3 2 6 2.500M4.500.500l2 2-2 2M8.300 5.500c0 3-2.300 4.500-5.300 4M4.500 11.500l-2-2 2-2" />
                </SideRefresh>
                <SidePin width="7" height="12" viewBox="0 0 7 12" fill="none" stroke="#999"><path d="M1.500.500h4v6h-4zM0 6.500h7M3.500 6.500V12M4.500 1v5" /></SidePin>
              </SidebarTools>
              <Group icon={<Triangle size={19} />} title="Jobs" items={jobs} />
              <Group icon={<Person />} title="Contacts" items={contacts} h={39} />
              <Group icon={<Sheet c="#1295d4" />} title="Sales Orders" items={["$50698.00, Bal Due $0.00, Not Paid"]} h={39} />
              <Group icon={<Sheet c="#82b83c" />} title="Proposals" h={32} closed />
              <Group icon={<Day31 />} title="Appointments" items={appointments} h={30} top />
            </SidebarContent>
            <SidebarScroll />
          </SidebarInner>
        </Sidebar>

        <Main>
          <ViewTabs>
            {["Desk View", "Schedule View 1", "Schedule View 2", "List View"].map((t, i) => (
              <ViewTab key={t} $active={i === 2}>{t}</ViewTab>
            ))}
          </ViewTabs>
          <SectionBar>
            <Day31 c="#86b4cb" />
            <SectionTitle>Sales Appointments</SectionTitle>
            <SelectBox>
              <BranchSelect aria-label="Branch" defaultValue="All Branches">
                <option>All Branches</option>
              </BranchSelect>
              <svg width="10" height="7" viewBox="0 0 10 7" fill="none" stroke="#111" strokeWidth="2"><path d="M1 1l4 4 4-4" /></svg>
            </SelectBox>
            <button aria-label="Chart"><Chart /></button>
          </SectionBar>
          <DateBar>
            <MiniCal />
            <DateRange>Monday Dec 30 2024 - Sunday Jan 05 2025</DateRange>
            <RoundButton aria-label="Previous"><ArrowDisc back /></RoundButton>
            <RoundButton aria-label="Next"><ArrowDisc /></RoundButton>
            {["3 Days", "7 Days", "14 Days"].map((t, i) => (
              <RangeButton key={t} $active={i === 1}>{t}</RangeButton>
            ))}
          </DateBar>
          <Scheduler>
            <TableClip>
              <Grid>
                <colgroup>
                  <Col $w={12} />
                  <Col $w={130} />
                  {days.map(([d]) => <Col key={d} />)}
                  <Col $w={40} />
                </colgroup>
                <thead>
                  <tr>
                    <HeadCell colSpan={2} />
                    {days.map(([label, a, b, state]) => (
                      <HeadCell key={label} scope="col" $divided $today={state === "today"} $off={state === "off"}>
                        <HeadInner>
                          <Count $tone="blue">{a}</Count>
                          {label}
                          <Count $tone="white">{b}</Count>
                        </HeadInner>
                      </HeadCell>
                    ))}
                    <HeadCell $divided />
                  </tr>
                </thead>
                <tbody>
                  {rows.map((row) => <Row key={row.name} row={row} />)}
                </tbody>
              </Grid>
            </TableClip>
            <VScroll />
          </Scheduler>
          <HScroll />
        </Main>
      </Body>

      <Taskbar>
        <SystemButton aria-label="Start">
          <svg width="16" height="17" viewBox="0 0 16 17" fill="#fff"><path d="M0 2.500L7 1.500V8H0zM8 1.300L16 0v8H8zM0 9h7v6.500l-7-1zM8 9h8v8l-8-1.300z" /></svg>
        </SystemButton>
        <SystemButton aria-label="Search">
          <svg width="23" height="24" viewBox="0 0 23 24" fill="none" stroke="#fff" strokeWidth="2"><circle cx="13" cy="9.500" r="8" /><path d="M7.500 15.500L1 23" /></svg>
        </SystemButton>
        <SystemButton aria-label="Task view">
          <svg width="17" height="16" viewBox="0 0 17 16" fill="none" stroke="#fff" strokeWidth="1.200"><path d="M1 0v3h10V0M1 5.500h10v5H1zM1 16v-3h10v3M15 0v3M15 8v8" /><path d="M13.800 4.500h2.400V7h-2.400z" fill="#fff" stroke="none" /></svg>
        </SystemButton>
        <FirstApp />
        <AppButton aria-label="Printer assistant">
          <svg width="24" height="24" viewBox="0 0 24 24" fill="none" stroke="#fff" strokeWidth="1.100">
            <path d="M0 0h24v24H0z" fill="#0096d6" stroke="none" />
            <path d="M8 8.500V6.500h6v2M6 13.500v-4c0-.6.500-1 1-1h8.500c.7 0 1 .4 1 1M8.500 11h4v6h-4zM6 13.500h2.500M9.500 13h2M9.500 15h2M14.500 11.500h3V17h-3z" />
          </svg>
        </AppButton>
        <AppButton $active aria-label="Chrome">
          <svg width="24" height="24" viewBox="0 0 24 24">
            <circle cx="12" cy="12" r="12" fill="#fbc116" />
            <path d="M12 12L1.600 6a12 12 0 0 1 20.800 0H12z" fill="#e33b2e" />
            <path d="M1.600 6A12 12 0 0 0 12 24l5.200-9L12 12 6.800 15z" fill="#229a48" />
            <circle cx="12" cy="12" r="6" fill="#fff" />
            <circle cx="12" cy="12" r="4.700" fill="#3b7ded" />
          </svg>
        </AppButton>
        <AppButton aria-label="File Explorer">
          <svg width="23" height="20" viewBox="0 0 23 20">
            <path d="M0 1h9l2 3h11v15H0z" fill="#e0a21c" />
            <path d="M0 5h23v14H0z" fill="#fcd670" />
            <path d="M4 11h15v8h-4v-4H8v4H4z" fill="#3c95da" />
          </svg>
        </AppButton>
        <AppButton aria-label="Excel">
          <svg width="24" height="22" viewBox="0 0 24 22">
            <path d="M6 0h9v6H6z" fill="#21a366" /><path d="M15 0h9v6h-9z" fill="#33c481" />
            <path d="M6 6h9v9H6z" fill="#107c41" /><path d="M15 6h9v5h-9z" fill="#21a366" />
            <path d="M15 11h9v6h-9z" fill="#107c41" /><path d="M6 15h18v7H6z" fill="#185c37" />
            <path d="M0 4h14v14H0z" fill="#107c41" />
            <text x="7" y="15" fontSize="11" fontWeight="700" fill="#fff" textAnchor="middle" fontFamily="Open Sans">X</text>
          </svg>
        </AppButton>
        <AppButton aria-label="DYMO Connect">
          <svg width="24" height="24" viewBox="0 0 24 24">
            <path d="M.5.500h23v23H.5z" fill="#26a6dd" stroke="#fff" />
            <text x="12" y="12" fontSize="6.500" fontWeight="700" fill="#fff" textAnchor="middle" fontFamily="Open Sans">DYMO</text>
            <text x="12" y="18" fontSize="4.500" fontWeight="600" fill="#fff" textAnchor="middle" fontFamily="Open Sans">Connect</text>
          </svg>
        </AppButton>
        <AppButton aria-label="Word">
          <svg width="24" height="22" viewBox="0 0 24 22">
            <path d="M6 0h18v6H6z" fill="#41a5ee" /><path d="M6 6h18v5H6z" fill="#2b7cd3" />
            <path d="M6 11h18v5H6z" fill="#185abd" /><path d="M6 16h18v6H6z" fill="#103f91" />
            <path d="M0 4h14v14H0z" fill="#185abd" />
            <text x="7" y="15" fontSize="11" fontWeight="700" fill="#fff" textAnchor="middle" fontFamily="Open Sans">W</text>
          </svg>
        </AppButton>
        <Clock>
          <div>3:59 PM</div>
          <div>12/31/2024</div>
        </Clock>
      </Taskbar>

      <Avatar>
        <svg width="222" height="222" viewBox="0 0 222 222">
          <defs><clipPath id="face"><circle cx="111" cy="111" r="103" /></clipPath></defs>
          <circle cx="111" cy="111" r="110.500" fill="#f3f3f7" stroke="#dcdce0" />
          <circle cx="111" cy="111" r="103" fill="#b9b7c5" />
          <g clipPath="url(#face)" fill="none" stroke="#f3f3f7" strokeWidth="9">
            <circle cx="111" cy="84" r="42.500" />
            <circle cx="111" cy="240" r="96" />
          </g>
        </svg>
      </Avatar>
      <Ghost>
        <svg width="15" height="15" viewBox="0 0 15 15" fill="none" stroke="#d5d5d5" strokeWidth="1.500"><path d="M1 1h13v13H1zM1 4.500h13M5 4.500V14" /></svg>
      </Ghost>
      <Recorder>
        <StopButton aria-label="Stop" />
        <button aria-label="Pause"><svg width="14" height="14" viewBox="0 0 14 14" fill="#fff"><rect x="1" width="4" height="14" rx="1.500" /><rect x="8" width="4" height="14" rx="1.500" /></svg></button>
        <button aria-label="Rewind"><svg width="18" height="12" viewBox="0 0 18 12" fill="#fff"><path d="M9 0v12L0 6zM18 0v12L9 6z" /></svg></button>
        <Time>0:37</Time>
        <RecorderRule />
        <button aria-label="Effects">
          <svg width="17" height="17" viewBox="0 0 17 17" fill="#fff">
            {[[6.5, 1], [10.5, 1], [3, 4.5], [6.5, 4.5], [10.5, 4.5], [14, 4.5], [1, 8.5], [4.7, 8.5], [8.5, 8.5], [12.3, 8.5], [16, 8.5], [3, 12.5], [6.5, 12.5], [10.5, 12.5], [14, 12.5], [6.5, 16], [10.5, 16]].map(([x, y]) => (
              <circle key={x + "-" + y} cx={x} cy={y} r="1.200" />
            ))}
          </svg>
        </button>
        <button aria-label="Restart"><svg width="14" height="15" viewBox="0 0 14 15" fill="none" stroke="#fff" strokeWidth="1.700"><path d="M2.500 4.500A5.800 5.800 0 1 1 1.300 9M5.500.800L2 4.500l4 2.500" /></svg></button>
        <button aria-label="Delete"><svg width="16" height="18" viewBox="0 0 16 18" fill="none" stroke="#fff" strokeWidth="1.900"><path d="M0 4h16M2.500 4v13h11V4M5 4V1h6v3M6.500 8v5.500M9.500 8v5.500" /></svg></button>
      </Recorder>
      <Pointer>
        <svg width="26" height="34" viewBox="0 0 26 34">
          <path d="M9 2.500c1.700 0 2.500 1.200 2.500 3v8c1.500-1 3-.5 3.500 1 1.500-.8 3-.3 3.500 1 1.500-.6 3.300.2 3.500 2.500.3 4-.5 8-3 12l-.5 2.500H9.500C8.500 28 5 25 2.500 20.500c-1-2 1-3.500 3-2l1.500 1.500V5.500c0-1.800.6-3 2-3z" fill="#fff" stroke="#111" strokeWidth="1.400" />
          <path d="M11.500 13.500V18M15 15v3.500M18.500 16v3" stroke="#111" strokeWidth="1.200" />
        </svg>
      </Pointer>
    </Screen>
  );
}
